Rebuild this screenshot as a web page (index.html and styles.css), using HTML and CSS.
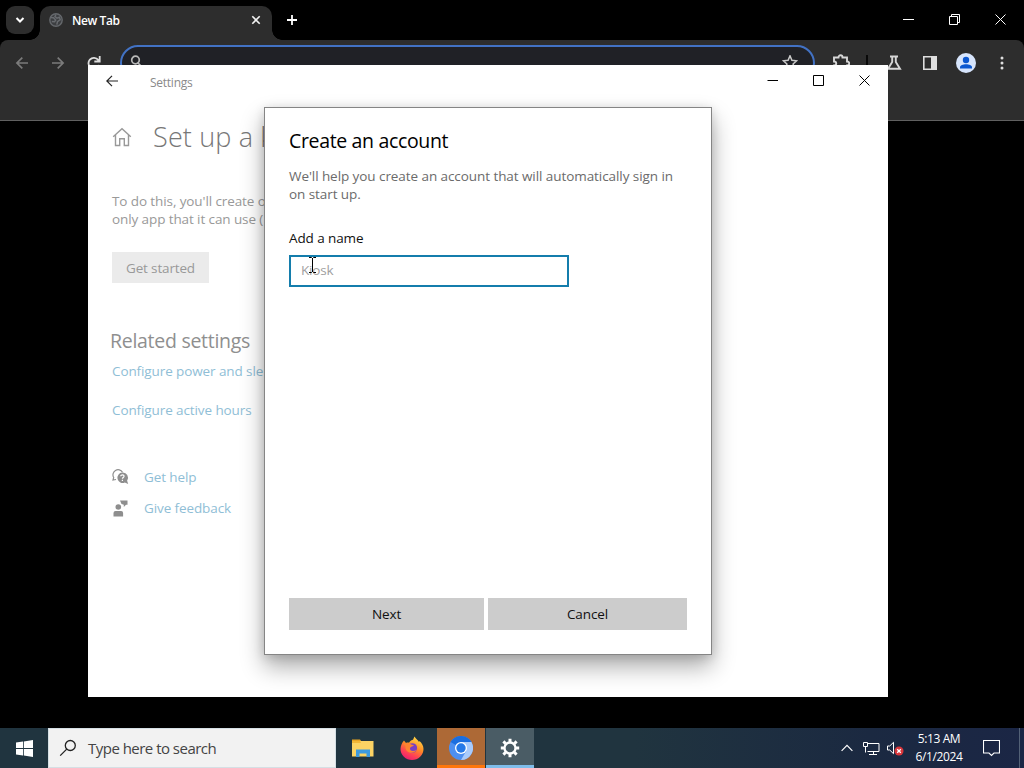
FILE: index.html
```html
<!DOCTYPE html>
<html lang="en">
<head>
<meta charset="utf-8">
<title>Set up a kiosk</title>
<link rel="stylesheet" href="styles.css">
</head>
<body>
<div class="desktop">
  <section class="browser">
    <div class="tabstrip">
      <button class="tab-search"><svg width="28" height="28" viewBox="0 0 28 28"><path d="M10.500 12l3.500 3.500 3.500-3.500" fill="none" stroke="#fff" stroke-width="2"/></svg></button>
      <div class="tab">
        <svg width="14" height="14" viewBox="0 0 14 14"><circle cx="7" cy="7" r="6.200" fill="#3c3e41" stroke="#65686c" stroke-width="1.400"/><path d="M1.500 4.500l3 .3 2.200 2.300-1.200 1.700-2.700-.3M7 1.500L6 3.500l2 1.700 2.400-1 .8 2.500-2.700 2-.7 3" fill="none" stroke="#686b6f" stroke-width="1.500"/></svg>
        <span class="tab-title">New Tab</span>
        <svg class="tab-close" width="10" height="10" viewBox="0 0 10 10"><path d="M1.300 1.300l7.400 7.400m0-7.400L1.300 8.700" stroke="#f2f2f2" stroke-width="1.600"/></svg>
      </div>
      <svg class="new-tab" width="12" height="12" viewBox="0 0 12 12"><path d="M6 1v10M1 6h10" stroke="#fff" stroke-width="1.800"/></svg>
      <div class="browser-controls">
        <svg width="11" height="11" viewBox="0 0 11 11"><path d="M0 5.500h11" stroke="#fff"/></svg>
        <svg width="11" height="11" viewBox="0 0 11 11"><path d="M.5 2.500h8v8h-8zM2.500 2.500v-2h8v8h-2" fill="none" stroke="#fff"/></svg>
        <svg width="11" height="11" viewBox="0 0 11 11"><path d="M.5.500l10 10m0-10l-10 10" stroke="#fff"/></svg>
      </div>
    </div>
    <div class="toolbar">
      <div class="nav-icons">
        <svg width="14" height="14" viewBox="0 0 14 14"><path d="M13 7H2m5.300-5.400L1.900 7l5.400 5.400" fill="none" stroke="#7b7b7b" stroke-width="1.700"/></svg>
        <svg width="14" height="14" viewBox="0 0 14 14"><path d="M1 7h11M6.700 1.600L12.100 7l-5.400 5.400" fill="none" stroke="#7b7b7b" stroke-width="1.700"/></svg>
        <svg width="14" height="14" viewBox="0 0 14 14"><path d="M12 9a5.400 5.400 0 1 1-.8-5.100L12.500 5.300M12.700 0v5.500H7.300" fill="none" stroke="#dedede" stroke-width="1.800"/></svg>
      </div>
      <div class="omnibox">
        <svg width="14" height="14" viewBox="0 0 14 14"><circle cx="5.500" cy="5" r="3.800" fill="none" stroke="#b9b9b9" stroke-width="1.700"/><path d="M8 8l5 5" stroke="#b9b9b9" stroke-width="1.700"/></svg>
        <svg width="16" height="16" viewBox="0 0 16 16"><path d="M8 .8l1.900 4.500 4.700.5-3.500 3.100 1 4.600L8 11.100l-4.100 2.400 1-4.600-3.500-3.100 4.700-.5z" fill="none" stroke="#c9c9c9" stroke-width="1.500"/></svg>
      </div>
      <div class="actions">
        <svg width="18" height="18" viewBox="0 0 18 18"><path d="M2 3.500h4.500C6.500.500 10.500.500 10.500 3.500H15V7.500c3 0 3 4 0 4V16H2v-4.500c3 0 3-4 0-4z" fill="none" stroke="#d6d6d6" stroke-width="1.900"/></svg>
        <i class="divider"></i>
        <svg class="flask" width="16" height="16" viewBox="0 0 16 16"><path d="M4 1.500h8M6.200 2v5L2 13.800h12L9.800 7V2" fill="none" stroke="#d6d6d6" stroke-width="1.900"/></svg>
        <svg class="side" width="14" height="14" viewBox="0 0 14 14"><path d="M.8.800h12.400v12.400H.8z" fill="none" stroke="#dedede" stroke-width="1.600"/><path d="M8 0h6v14H8z" fill="#dedede"/></svg>
        <svg class="avatar" width="20" height="20" viewBox="0 0 20 20"><circle cx="10" cy="10" r="10" fill="#d7e5fc"/><circle cx="10" cy="7" r="3.200" fill="#0b57d0"/><path d="M4 15.500v-1.300c0-4 12-4 12 0v1.300z" fill="#0b57d0"/></svg>
        <svg width="4" height="14" viewBox="0 0 4 14"><circle cx="2" cy="2" r="1.500" fill="#dedede"/><circle cx="2" cy="7" r="1.500" fill="#dedede"/><circle cx="2" cy="12" r="1.500" fill="#dedede"/></svg>
      </div>
    </div>
  </section>

  <section class="settings">
    <header class="titlebar">
      <svg width="12" height="12" viewBox="0 0 12 12"><path d="M12 6H.8M6 .8L.8 6 6 11.200" fill="none" stroke="#222" stroke-width="1.200"/></svg>
      <span class="app-name">Settings</span>
      <div class="window-controls">
        <svg width="11" height="11" viewBox="0 0 11 11"><path d="M.5 5.500H11" stroke="#000"/></svg>
        <svg width="11" height="11" viewBox="0 0 11 11"><path d="M.5.500h10v10H.5z" fill="none" stroke="#000"/></svg>
        <svg width="11" height="11" viewBox="0 0 11 11"><path d="M.5.500l10 10m0-10l-10 10" stroke="#000"/></svg>
      </div>
    </header>
    <main class="page">
      <h1 class="page-title">
        <svg width="20" height="20" viewBox="0 0 20 20"><path d="M1.200 9.800L10 1.800l8.800 8M3.500 8v10.500h4.200v-6.700h4.600v6.700h4.200V8" fill="none" stroke="#999" stroke-width="1.400"/></svg>
        <span>Set up a k</span>
      </h1>
      <p class="intro">To do this, you'll create o<br>only app that it can use (</p>
      <button class="get-started">Get started</button>
      <h2 class="related">Related settings</h2>
      <a class="link power">Configure power and sle</a>
      <a class="link hours">Configure active hours</a>
      <div class="support">
        <svg width="17" height="17" viewBox="0 0 17 17"><path d="M10.500 3.200A5 5 0 1 0 1.700 8.500L1 11l3-.5" fill="none" stroke="#8e8e8e" stroke-width="1.200"/><path d="M10.300 3.600a5.200 5.200 0 1 0 2.500 9.900l3.400 1.500-1.100-3.300a5.200 5.200 0 0 0-4.800-8.100z" fill="#8e8e8e"/><path d="M8.700 7.300c0-2 3.600-2 3.300.1-.2 1.100-1.600 1-1.600 2.400m0 1v1.200" fill="none" stroke="#fff" stroke-width="1.200"/></svg>
        <a class="link">Get help</a>
      </div>
      <div class="support">
        <svg width="17" height="17" viewBox="0 0 17 17"><circle cx="6.300" cy="7" r="2.800" fill="#8e8e8e"/><path d="M1.500 16.500v-3.500q0-2 2-2h5.600q2 0 2 2v3.500zM8 .5h7.500v4.200h-1.500l-2.200 2.300V4.700L9.500 4z" fill="#8e8e8e"/></svg>
        <a class="link">Give feedback</a>
      </div>
    </main>
  </section>

  <section class="dialog">
    <h2 class="dialog-title">Create an account</h2>
    <p class="dialog-text">We'll help you create an account that will automatically sign in<br>on start up.</p>
    <label class="field-label">Add a name</label>
    <div class="field">Kiosk</div>
    <div class="dialog-buttons">
      <button class="next">Next</button>
      <button class="cancel">Cancel</button>
    </div>
  </section>
  <svg class="cursor" width="9" height="16" viewBox="0 0 9 16"><path d="M1 .5h2.500l1 1 1-1H8M4.500 1v14M1 15.500h2.500l1-1 1 1H8" fill="none" stroke="#000"/></svg>

  <footer class="taskbar">
    <div class="start"><svg width="17" height="17" viewBox="0 0 17 17"><path d="M0 2.400L7 1.500v6.600H0zM7.800 1.400L17 0v8.100H7.800zM0 8.900h7v6.600l-7-.9zM7.800 8.900H17V17l-9.200-1.400z" fill="#fff"/></svg></div>
    <div class="search">
      <svg width="18" height="18" viewBox="0 0 18 18"><circle cx="11.300" cy="6.500" r="5" fill="none" stroke="#222" stroke-width="1.300"/><path d="M7.700 10.100L1.200 16.600" stroke="#222" stroke-width="1.300"/></svg>
      <span>Type here to search</span>
    </div>
    <div class="app"><svg width="22" height="20" viewBox="0 0 22 20"><path d="M0 1.500h8l1.500 2H0z" fill="#e8a322"/><path d="M0 3h21.500v15.500H0z" fill="#fbd364"/><path d="M0 3h8l1 2H0z" fill="#f2b737"/><path d="M4 19v-7.500h14V19h-3.500v-3.500h-7V19z" fill="#3d9ade"/></svg></div>
    <div class="app"><svg width="24" height="24" viewBox="0 0 24 24">
      <defs><linearGradient id="fire" x1=".8" y1="0" x2=".3" y2="1"><stop offset="0" stop-color="#ffe34a"/><stop offset=".45" stop-color="#ff8a26"/><stop offset=".75" stop-color="#ff4055"/><stop offset="1" stop-color="#e91e70"/></linearGradient></defs>
      <path d="M4 4.500L6 7c1-.4 2-.5 3-.3C10 4.700 12 4 13 3.800l1.500-3.300c1 2 4 4 4.500 5.500l.5-1C22 7 23.500 10 23.500 13A11.500 11 0 0 1 .5 13C.5 10 2 6.500 4 4.500z" fill="url(#fire)"/><circle cx="12.300" cy="12" r="4.800" fill="#7a3fc4"/><path d="M4 8c2-1.500 5-1.500 7 .5l3 .8c-1 1.300-3 1.300-4 2.700-.5 3 3 4 6.500 2-3 5-12 3-11-4z" fill="#ff8430"/></svg></div>
    <div class="app chromium"><svg width="24" height="24" viewBox="0 0 24 24"><circle cx="12" cy="12" r="12" fill="#4d8ff0"/><path d="M12 12L1.600 6A12 12 0 0 1 22.400 6z" fill="#1b6ee0"/><path d="M12 6h10.400A12 12 0 0 1 12 24l5.200-9z" fill="#a9cbfb"/><circle cx="12" cy="12" r="6" fill="#fff"/><circle cx="12" cy="12" r="4.700" fill="#2579e8"/></svg></div>
    <div class="app gear"><svg width="20" height="20" viewBox="-10 -10 20 20"><circle r="5.500" fill="none" stroke="#fff" stroke-width="2.300"/><g stroke="#fff" stroke-width="3"><path d="M0-6v-3.200M0 6v3.200M6 0h3.200M-6 0h-3.200M4.300-4.300l2.300-2.300M-4.300-4.300l-2.300-2.300M4.300 4.300l2.300 2.300M-4.300 4.300l-2.300 2.300"/></g></svg></div>
    <div class="tray">
      <svg width="12" height="8" viewBox="0 0 12 8"><path d="M.6 6.800L6 1.400l5.400 5.400" fill="none" stroke="#fff" stroke-width="1.200"/></svg>
      <svg class="network" width="17" height="14" viewBox="0 0 17 14"><path d="M5 2.500h11v8H4.500M.5 1.500h4v4h-4zM2.500 5.500v6M10.500 10.500v3M6 13.500h8" fill="none" stroke="#fff"/></svg>
      <svg class="volume" width="17" height="15" viewBox="0 0 17 15"><path d="M.5 5h2.200L6.500 1.300v11.400L2.700 9H.5z" fill="none" stroke="#fff"/><circle cx="12" cy="10" r="4.500" fill="#d9363b"/><path d="M10.200 8.200l3.600 3.600m0-3.600l-3.600 3.600" stroke="#fff" stroke-width="1.300"/></svg>
      <div class="clock"><span>5:13 AM</span><span class="date">6/1/2024</span></div>
      <svg class="notice" width="17" height="17" viewBox="0 0 17 17"><path d="M.5.500h16v12.500H11L8.500 15.500 6 13H.5z" fill="none" stroke="#fff" stroke-width="1.100"/></svg>
      <i class="peek"></i>
    </div>
  </footer>
</div>
</body>
</html>
```
FILE: styles.css
```css
* { box-sizing: border-box; }
body { margin: 0; background: #000; font-family: "Open Sans", "Noto Sans", sans-serif; font-size: 14px; }
h1, h2, p { margin: 0; font-weight: 400; }
button { border: 0; padding: 0; font: inherit; letter-spacing: inherit; }
svg { display: block; flex: none; }
.desktop { position: relative; width: 1024px; height: 768px; overflow: hidden; background: #000; white-space: nowrap; }

.browser { position: absolute; left: 0; top: 0; width: 1024px; height: 121px; }
.tabstrip { display: flex; align-items: center; height: 40px; padding-left: 6px; }
.tab-search { width: 28px; height: 28px; border-radius: 9px; background: #2d2d2d; }
.tab { position: relative; display: flex; align-items: center; align-self: flex-end; width: 232px; height: 34px; margin-left: 6px; padding: 0 11px 6px 9px; border-radius: 10px 10px 0 0; background: #2d2d2d; color: #fff; }
.tab::before, .tab::after { content: ""; position: absolute; bottom: 0; width: 10px; height: 10px; }
.tab::before { left: -10px; background: radial-gradient(circle at 0 0, transparent 9.5px, #2d2d2d 10px); }
.tab::after { right: -10px; background: radial-gradient(circle at 100% 0, transparent 9.5px, #2d2d2d 10px); }
.tab-title { margin-left: 9px; padding-top: 1px; font-size: 12px; font-weight: 600; line-height: 17px; letter-spacing: -.4px; }
.tab-close { margin-left: auto; }
.new-tab { margin-left: 14px; }
.browser-controls { display: flex; gap: 35px; margin-left: auto; padding: 0 18px 1px 0; }
.toolbar { display: flex; height: 81px; padding-top: 5px; border-bottom: 1px solid #606060; border-radius: 8px 8px 0 0; background: #2d2d2d; }
.nav-icons { display: flex; gap: 22px; width: 120px; padding: 11px 0 0 15px; }
.omnibox { display: flex; justify-content: space-between; width: 695px; height: 36px; padding: 8px 15px 0 8px; border: 2px solid #4272c4; border-radius: 18px; background: #202126; }
.actions { display: flex; align-items: center; height: 36px; padding-left: 17px; }
.divider { width: 2px; height: 16px; margin-left: 16px; background: #090909; }
.flask { margin-left: 18px; }
.side { margin-left: 21px; }
.avatar { margin: 0 24px 0 19px; }

.settings { position: absolute; left: 88px; top: 65px; width: 800px; height: 632px; background: #fff; }
.titlebar { display: flex; align-items: center; height: 32px; padding: 0 18px 0 18px; }
.app-name { margin-left: 32px; padding-top: 2px; color: #8a8a8a; font-size: 12px; letter-spacing: -.25px; }
.window-controls { display: flex; gap: 35px; margin-left: auto; padding-bottom: 1px; }
.page { display: flex; flex-direction: column; align-items: flex-start; width: 190px; padding: 21px 0 0 24px; color: #999; }
.page-title { display: flex; align-items: center; height: 38px; font-size: 27px; font-weight: 300; line-height: 38px; letter-spacing: .15px; color: #777; }
.page-title span { margin-left: 21px; }
.intro { margin-top: 36px; font-size: 13.5px; line-height: 18px; letter-spacing: -.1px; }
.get-started { width: 97px; height: 31px; margin-top: 24px; background: #ebebeb; color: #999; font-size: 13.5px; letter-spacing: -.15px; }
.related { margin: 45px 0 0 -2px; font-size: 19.5px; line-height: 26px; letter-spacing: -.28px; color: #8f8f8f; }
.link { color: #8fbed6; font-size: 13.5px; line-height: 20px; letter-spacing: -.1px; }
.power { margin-top: 7px; }
.hours { margin: 19px 0 47px; }
.support { display: flex; align-items: center; height: 20px; margin-bottom: 11px; }
.support .link { margin-left: 15px; }

.dialog { position: absolute; left: 264px; top: 107px; display: flex; flex-direction: column; width: 448px; height: 548px; padding: 20px 24px 24px; border: 1px solid #858585; background: #fff; box-shadow: 0 12px 22px rgba(0,0,0,.32), 0 2px 10px rgba(0,0,0,.14); color: #111; }
.dialog-title { font-size: 19.5px; line-height: 26px; letter-spacing: -.34px; color: #000; }
.dialog-text { margin-top: 13px; color: #6b6b6b; font-size: 13.5px; line-height: 18px; letter-spacing: -.07px; }
.field-label { margin-top: 25px; font-size: 13.5px; line-height: 20px; letter-spacing: -.1px; }
.field { width: 280px; height: 32px; margin-top: 7px; padding-left: 10px; border: 2px solid #147dac; color: #a0a0a0; font-size: 13.5px; line-height: 27px; letter-spacing: -.2px; }
.dialog-buttons { display: flex; gap: 4px; margin-top: auto; color: #111; }
.dialog-buttons button { height: 32px; background: #ccc; color: #111; font-size: 13.5px; letter-spacing: -.1px; }
.next { width: 195px; }
.cancel { width: 199px; }
.cursor { position: absolute; left: 308px; top: 257px; }

.taskbar { position: absolute; left: 0; top: 728px; display: flex; width: 1024px; height: 40px; background: linear-gradient(90deg, #20343f 0, #20343f 62%, #1b2941 85%, #1b2645 100%); color: #fff; }
.start { display: grid; place-items: center; width: 48px; }
.search { display: flex; align-items: center; width: 288px; padding-left: 10px; border: 1px solid #d5dfe4; background: #f2f2f2; color: #444; font-size: 15px; letter-spacing: -.52px; }
.search span { margin-left: 11px; }
.app { display: grid; place-items: center; width: 49px; padding-left: 4px; }
.app.chromium { width: 48px; margin-left: 3px; padding: 3px 0 0; border-bottom: 3px solid #ff760c; background: #ad6936; }
.app.gear { width: 48px; margin-left: 1px; padding: 3px 0 0; border-bottom: 3px solid #7fbdea; background: #4a5c65; }
.tray { display: flex; align-items: center; margin-left: auto; }
.network { margin-left: 10px; }
.volume { margin-left: 7px; }
.clock { display: flex; flex-direction: column; align-items: center; width: 56px; margin-left: 7px; font-size: 12px; line-height: 18px; letter-spacing: -.4px; }
.notice { margin-left: 16px; }
.peek { width: 1px; height: 40px; margin: 0 4px 0 19px; background: #536176; }
```
